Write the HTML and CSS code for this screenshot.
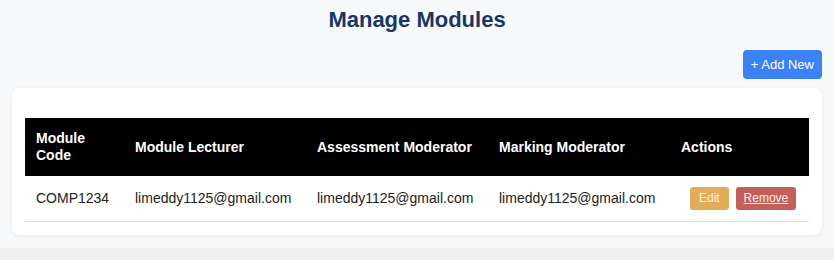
FILE: index.html
```html
<!DOCTYPE html>
<html>
<head>
<link rel="stylesheet" href="styles.css">
</head>
<body>

<div class="page">
    <h1 class="page-title">Manage Modules</h1>

    <div class="toolbar">
        <button class="add-btn">+ Add New</button>
    </div>

    <div class="card">
        <table class="modules-table">
            <thead>
                <tr>
                    <th class="col-code">Module Code</th>
                    <th class="col-email">Module Lecturer</th>
                    <th class="col-email">Assessment Moderator</th>
                    <th class="col-email">Marking Moderator</th>
                    <th class="col-actions">Actions</th>
                </tr>
            </thead>
            <tbody>
                <tr>
                    <td>COMP1234</td>
                    <td>limeddy1125@gmail.com</td>
                    <td>limeddy1125@gmail.com</td>
                    <td>limeddy1125@gmail.com</td>
                    <td class="actions-cell">
                        <button class="btn btn-edit">Edit</button>
                        <a href="#" class="btn btn-remove">Remove</a>
                    </td>
                </tr>
            </tbody>
        </table>
    </div>
</div>

</body>
</html>
```

FILE: styles.css
```css
body {
    margin: 0;
    background: #f0f0f0;
    font-family: "Liberation Sans", Arial, sans-serif;
    color: #222;
}

.page {
    background: #f8f9fa;
    padding: 7px 12px 13px;
}

.page-title {
    margin: 0 0 18px;
    font-size: 22px;
    line-height: 25px;
    text-align: center;
    color: #1b3564;
}

.toolbar {
    display: flex;
    justify-content: flex-end;
    margin-bottom: 9px;
}

.add-btn {
    background: #3b82f6;
    color: #fff;
    border: none;
    border-radius: 4px;
    padding: 7px 8px;
    font-family: inherit;
    font-size: 13px;
    line-height: 15px;
    cursor: pointer;
}

.card {
    background: #fff;
    border-radius: 8px;
    box-shadow: 0 1px 4px rgba(0,0,0,0.08);
    padding: 30px 13px 13px;
}

.modules-table {
    width: 100%;
    border-collapse: collapse;
    table-layout: fixed;
}

.modules-table th {
    box-sizing: border-box;
    background: #000;
    color: #fff;
    text-align: left;
    font-size: 14px;
    line-height: 17px;
    padding: 12px 11px;
}

.col-code { width: 99px; }
.col-email { width: 182px; }
.col-actions { width: 139px; }

.modules-table td {
    font-size: 14px;
    line-height: 17px;
    padding: 11px 11px;
    border-bottom: 1px solid #ddd;
    white-space: nowrap;
}

.modules-table td.actions-cell {
    padding-left: 20px;
}

.btn {
    display: inline-block;
    border: none;
    border-radius: 3px;
    font-family: inherit;
    font-size: 12px;
    line-height: 15px;
    padding: 4px 8px;
    vertical-align: middle;
    cursor: pointer;
}

.btn-edit {
    background: #e0ad5c;
    color: #fdf1d8;
    padding: 4px 9px;
}

.btn-remove {
    background: #c4605a;
    color: #fbe9e7;
    text-decoration: underline;
    margin-left: 3px;
}
```
